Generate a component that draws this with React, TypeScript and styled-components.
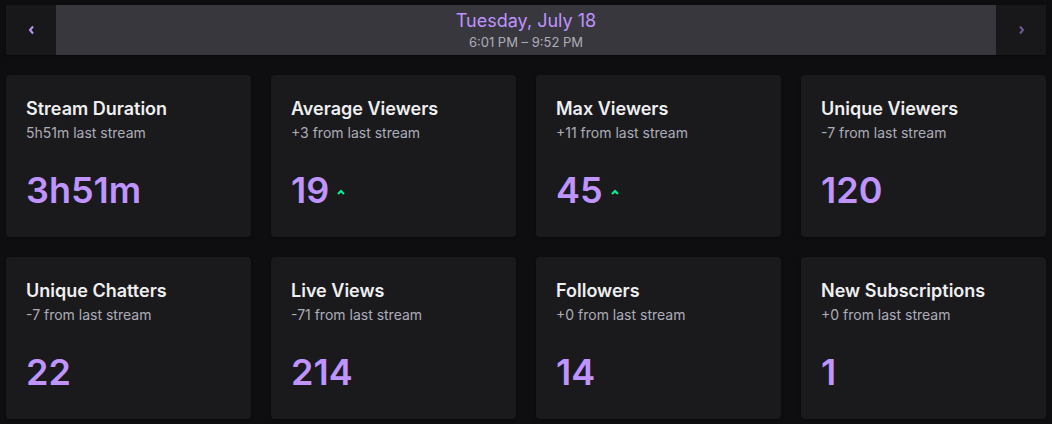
import styled, { createGlobalStyle } from 'styled-components';

const GlobalStyle = createGlobalStyle`
  body {
    margin: 0;
    background: #0e0e10;
    font-family: Inter, 'Noto Sans', sans-serif;
    color: #efeff1;
  }
`;

const Page = styled.div`
  padding: 5px 6px;
  display: flex;
  flex-direction: column;
  gap: 20px;
`;

const DateBar = styled.div`
  display: flex;
  height: 50px;
  background: #38373e;
  box-shadow: 0 1px 3px rgba(0, 0, 0, 0.4);
`;

const NavButton = styled.button<{ disabled?: boolean }>`
  width: 50px;
  border: none;
  padding: 0;
  background: #18181b;
  color: ${(props) => (props.disabled ? '#6e569a' : '#bf94ff')};
  display: flex;
  align-items: center;
  justify-content: center;
  cursor: pointer;
`;

const DateInfo = styled.div`
  flex: 1;
  display: flex;
  flex-direction: column;
  align-items: center;
  justify-content: center;
  gap: 2px;
`;

const DateTitle = styled.div`
  font-size: 18px;
  line-height: 22px;
  color: #bf94ff;
`;

const TimeRange = styled.div`
  font-size: 13px;
  line-height: 17px;
  color: #adadb8;
`;

const Grid = styled.div`
  display: grid;
  grid-template-columns: repeat(4, 1fr);
  gap: 20px;
`;

const Card = styled.div`
  background: #1a1a1d;
  border-radius: 4px;
  padding: 22px 20px 27px;
  box-shadow: 0 1px 3px rgba(0, 0, 0, 0.35);
`;

const Title = styled.div`
  font-size: 18px;
  line-height: 24px;
  font-weight: 600;
  color: #efeff1;
`;

const Subtitle = styled.div`
  margin-top: 2px;
  font-size: 14px;
  line-height: 20px;
  color: #adadb8;
`;

const ValueRow = styled.div`
  margin-top: 27px;
  display: flex;
  align-items: center;
  gap: 8px;
`;

const Value = styled.div`
  font-size: 36px;
  line-height: 40px;
  font-weight: 600;
  color: #bf94ff;
`;

const Trend = styled.span`
  color: #00f593;
  display: flex;
  margin-top: 3px;
`;

const Chevron = ({ dir }: { dir: 'left' | 'right' | 'up' }) => {
  if (dir === 'up') {
    return (
      <svg width="8" height="6" viewBox="0 0 8 6">
        <path d="M1 5 L4 2 L7 5" fill="none" stroke="currentColor" strokeWidth="2" />
      </svg>
    );
  }
  return (
    <svg width="7" height="10" viewBox="0 0 7 10">
      <path
        d={dir === 'left' ? 'M5 1.5 L2 5 L5 8.5' : 'M2 1.5 L5 5 L2 8.5'}
        fill="none"
        stroke="currentColor"
        strokeWidth="2"
      />
    </svg>
  );
};

const stats = [
  { title: 'Stream Duration', sub: '5h51m last stream', value: '3h51m' },
  { title: 'Average Viewers', sub: '+3 from last stream', value: '19', up: true },
  { title: 'Max Viewers', sub: '+11 from last stream', value: '45', up: true },
  { title: 'Unique Viewers', sub: '-7 from last stream', value: '120' },
  { title: 'Unique Chatters', sub: '-7 from last stream', value: '22' },
  { title: 'Live Views', sub: '-71 from last stream', value: '214' },
  { title: 'Followers', sub: '+0 from last stream', value: '14' },
  { title: 'New Subscriptions', sub: '+0 from last stream', value: '1' },
];

const App = () => {
  return (
    <>
      <GlobalStyle />
      <Page>
        <DateBar>
          <NavButton>
            <Chevron dir="left" />
          </NavButton>
          <DateInfo>
            <DateTitle>Tuesday, July 18</DateTitle>
            <TimeRange>6:01 PM – 9:52 PM</TimeRange>
          </DateInfo>
          <NavButton disabled>
            <Chevron dir="right" />
          </NavButton>
        </DateBar>
        <Grid>
          {stats.map((s) => (
            <Card key={s.title}>
              <Title>{s.title}</Title>
              <Subtitle>{s.sub}</Subtitle>
              <ValueRow>
                <Value>{s.value}</Value>
                {s.up && (
                  <Trend>
                    <Chevron dir="up" />
                  </Trend>
                )}
              </ValueRow>
            </Card>
          ))}
        </Grid>
      </Page>
    </>
  );
};

export default App;
